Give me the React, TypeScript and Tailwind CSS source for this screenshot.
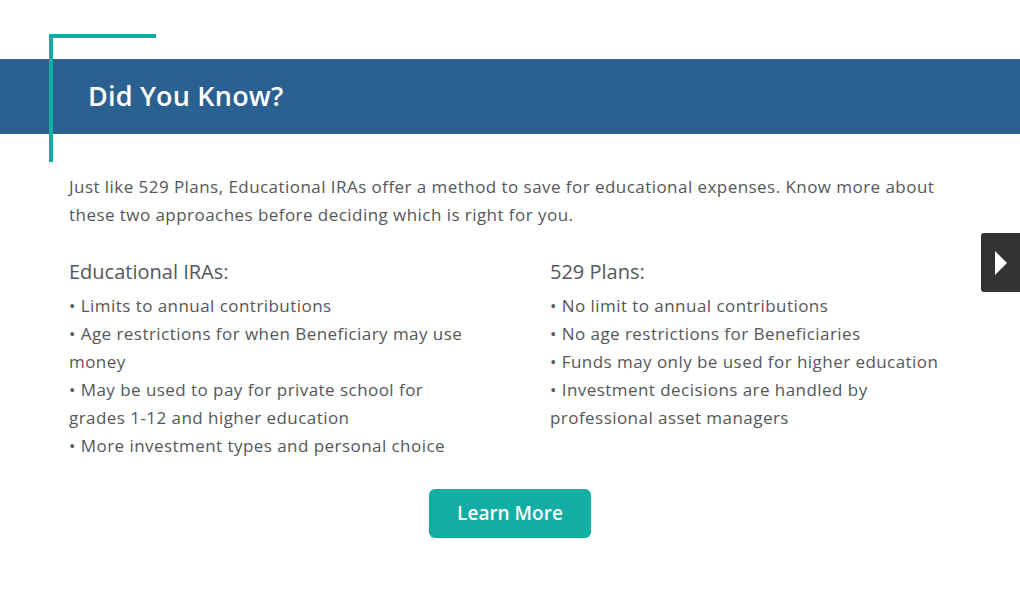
import React from 'react';

const iraPoints = [
  'Limits to annual contributions',
  'Age restrictions for when Beneficiary may use money',
  'May be used to pay for private school for grades 1-12 and higher education',
  'More investment types and personal choice',
];

const planPoints = [
  'No limit to annual contributions',
  'No age restrictions for Beneficiaries',
  'Funds may only be used for higher education',
  'Investment decisions are handled by professional asset managers',
];

function PointList({ title, points }: { title: string; points: string[] }) {
  return (
    <div>
      <h3 className="text-[20px] leading-[28px] text-[#555759] mb-[6px]">{title}</h3>
      <ul>
        {points.map((p) => (
          <li key={p} className="text-[17px] tracking-[0.45px] leading-[28px] text-[#555759]">
            • {p}
          </li>
        ))}
      </ul>
    </div>
  );
}

export default function App() {
  return (
    <div className="relative w-[1020px] h-[596px] bg-white overflow-hidden" style={{ fontFamily: '"Open Sans", sans-serif' }}>
      <div className="pt-[59px]">
        <div className="relative h-[75px] bg-[#2a6190] flex items-center pl-[88px]">
          <h2 className="text-[27px] tracking-[0.2px] font-semibold text-white">Did You Know?</h2>
        </div>
        {/* teal corner bracket */}
        <div className="absolute left-[49px] top-[34px] w-[107px] h-[4px] bg-[#12ada5]" />
        <div className="absolute left-[49px] top-[34px] w-[4px] h-[128px] bg-[#12ada5]" />

        <div className="px-[69px] pt-[39px]">
          <p className="text-[17px] tracking-[0.45px] leading-[28px] text-[#555759]">
            Just like 529 Plans, Educational IRAs offer a method to save for educational expenses. Know more about
            <br />
            these two approaches before deciding which is right for you.
          </p>
          <div className="grid grid-cols-2 gap-x-[80px] mt-[29px]">
            <PointList title="Educational IRAs:" points={iraPoints} />
            <PointList title="529 Plans:" points={planPoints} />
          </div>
          <div className="flex justify-center mt-[29px]">
            <button className="w-[162px] h-[49px] rounded-[6px] bg-[#12ada5] text-white text-[19px] font-semibold">
              Learn More
            </button>
          </div>
        </div>
      </div>

      {/* carousel arrow */}
      <button className="absolute right-0 top-[233px] w-[39px] h-[59px] bg-[#333333] rounded-l-[3px] flex items-center justify-center">
        <svg width="14" height="26" viewBox="0 0 14 26">
          <polygon points="1,1 13,13 1,25" fill="white" />
        </svg>
      </button>
    </div>
  );
}
